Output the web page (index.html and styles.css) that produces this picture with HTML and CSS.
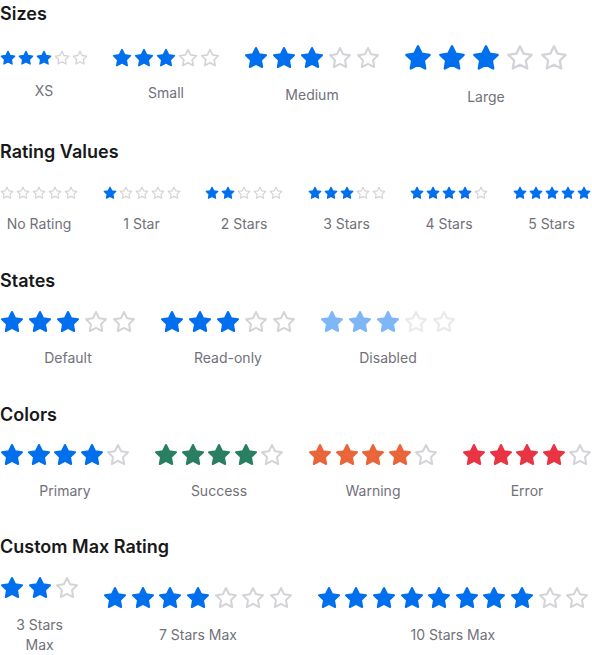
FILE: index.html
```html
<!DOCTYPE html>
<html lang="en">
<head>
<meta charset="utf-8">
<title>Rating</title>
<link rel="stylesheet" href="styles.css">
</head>
<body>
<svg class="sprite" aria-hidden="true"><defs><symbol id="star" viewBox="0 0 24 24"><polygon points="12 2 15.09 8.26 22 9.27 17 14.14 18.18 21.02 12 17.77 5.82 21.02 7 14.14 2 9.27 8.91 8.26 12 2"/></symbol></defs></svg>
<main class="page">
  <section class="section section-sizes">
    <h2 class="section-title">Sizes</h2>
    <div class="row row-sizes">
      <div class="rating">
        <div class="stars stars-xs">
          <svg class="star on"><use href="#star"/></svg><svg class="star on"><use href="#star"/></svg><svg class="star on"><use href="#star"/></svg><svg class="star"><use href="#star"/></svg><svg class="star"><use href="#star"/></svg>
        </div>
        <div class="label">XS</div>
      </div>
      <div class="rating">
        <div class="stars stars-sm">
          <svg class="star on"><use href="#star"/></svg><svg class="star on"><use href="#star"/></svg><svg class="star on"><use href="#star"/></svg><svg class="star"><use href="#star"/></svg><svg class="star"><use href="#star"/></svg>
        </div>
        <div class="label">Small</div>
      </div>
      <div class="rating">
        <div class="stars stars-md">
          <svg class="star on"><use href="#star"/></svg><svg class="star on"><use href="#star"/></svg><svg class="star on"><use href="#star"/></svg><svg class="star"><use href="#star"/></svg><svg class="star"><use href="#star"/></svg>
        </div>
        <div class="label">Medium</div>
      </div>
      <div class="rating">
        <div class="stars stars-lg">
          <svg class="star on"><use href="#star"/></svg><svg class="star on"><use href="#star"/></svg><svg class="star on"><use href="#star"/></svg><svg class="star"><use href="#star"/></svg><svg class="star"><use href="#star"/></svg>
        </div>
        <div class="label">Large</div>
      </div>
    </div>
  </section>

  <section class="section">
    <h2 class="section-title">Rating Values</h2>
    <div class="row row-values">
      <div class="rating">
        <div class="stars stars-tiny">
          <svg class="star"><use href="#star"/></svg><svg class="star"><use href="#star"/></svg><svg class="star"><use href="#star"/></svg><svg class="star"><use href="#star"/></svg><svg class="star"><use href="#star"/></svg>
        </div>
        <div class="label">No Rating</div>
      </div>
      <div class="rating">
        <div class="stars stars-tiny">
          <svg class="star on"><use href="#star"/></svg><svg class="star"><use href="#star"/></svg><svg class="star"><use href="#star"/></svg><svg class="star"><use href="#star"/></svg><svg class="star"><use href="#star"/></svg>
        </div>
        <div class="label">1 Star</div>
      </div>
      <div class="rating">
        <div class="stars stars-tiny">
          <svg class="star on"><use href="#star"/></svg><svg class="star on"><use href="#star"/></svg><svg class="star"><use href="#star"/></svg><svg class="star"><use href="#star"/></svg><svg class="star"><use href="#star"/></svg>
        </div>
        <div class="label">2 Stars</div>
      </div>
      <div class="rating">
        <div class="stars stars-tiny">
          <svg class="star on"><use href="#star"/></svg><svg class="star on"><use href="#star"/></svg><svg class="star on"><use href="#star"/></svg><svg class="star"><use href="#star"/></svg><svg class="star"><use href="#star"/></svg>
        </div>
        <div class="label">3 Stars</div>
      </div>
      <div class="rating">
        <div class="stars stars-tiny">
          <svg class="star on"><use href="#star"/></svg><svg class="star on"><use href="#star"/></svg><svg class="star on"><use href="#star"/></svg><svg class="star on"><use href="#star"/></svg><svg class="star"><use href="#star"/></svg>
        </div>
        <div class="label">4 Stars</div>
      </div>
      <div class="rating">
        <div class="stars stars-tiny">
          <svg class="star on"><use href="#star"/></svg><svg class="star on"><use href="#star"/></svg><svg class="star on"><use href="#star"/></svg><svg class="star on"><use href="#star"/></svg><svg class="star on"><use href="#star"/></svg>
        </div>
        <div class="label">5 Stars</div>
      </div>
    </div>
  </section>

  <section class="section">
    <h2 class="section-title">States</h2>
    <div class="row">
      <div class="rating">
        <div class="stars stars-md">
          <svg class="star on"><use href="#star"/></svg><svg class="star on"><use href="#star"/></svg><svg class="star on"><use href="#star"/></svg><svg class="star"><use href="#star"/></svg><svg class="star"><use href="#star"/></svg>
        </div>
        <div class="label">Default</div>
      </div>
      <div class="rating">
        <div class="stars stars-md">
          <svg class="star on"><use href="#star"/></svg><svg class="star on"><use href="#star"/></svg><svg class="star on"><use href="#star"/></svg><svg class="star"><use href="#star"/></svg><svg class="star"><use href="#star"/></svg>
        </div>
        <div class="label">Read-only</div>
      </div>
      <div class="rating">
        <div class="stars stars-md stars-disabled">
          <svg class="star on"><use href="#star"/></svg><svg class="star on"><use href="#star"/></svg><svg class="star on"><use href="#star"/></svg><svg class="star"><use href="#star"/></svg><svg class="star"><use href="#star"/></svg>
        </div>
        <div class="label">Disabled</div>
      </div>
    </div>
  </section>

  <section class="section section-colors">
    <h2 class="section-title">Colors</h2>
    <div class="row row-colors">
      <div class="rating">
        <div class="stars stars-color">
          <svg class="star on"><use href="#star"/></svg><svg class="star on"><use href="#star"/></svg><svg class="star on"><use href="#star"/></svg><svg class="star on"><use href="#star"/></svg><svg class="star"><use href="#star"/></svg>
        </div>
        <div class="label">Primary</div>
      </div>
      <div class="rating">
        <div class="stars stars-color tone-success">
          <svg class="star on"><use href="#star"/></svg><svg class="star on"><use href="#star"/></svg><svg class="star on"><use href="#star"/></svg><svg class="star on"><use href="#star"/></svg><svg class="star"><use href="#star"/></svg>
        </div>
        <div class="label">Success</div>
      </div>
      <div class="rating">
        <div class="stars stars-color tone-warning">
          <svg class="star on"><use href="#star"/></svg><svg class="star on"><use href="#star"/></svg><svg class="star on"><use href="#star"/></svg><svg class="star on"><use href="#star"/></svg><svg class="star"><use href="#star"/></svg>
        </div>
        <div class="label">Warning</div>
      </div>
      <div class="rating">
        <div class="stars stars-color tone-error">
          <svg class="star on"><use href="#star"/></svg><svg class="star on"><use href="#star"/></svg><svg class="star on"><use href="#star"/></svg><svg class="star on"><use href="#star"/></svg><svg class="star"><use href="#star"/></svg>
        </div>
        <div class="label">Error</div>
      </div>
    </div>
  </section>

  <section class="section">
    <h2 class="section-title">Custom Max Rating</h2>
    <div class="row row-custom">
      <div class="rating">
        <div class="stars stars-custom">
          <svg class="star on"><use href="#star"/></svg><svg class="star on"><use href="#star"/></svg><svg class="star"><use href="#star"/></svg>
        </div>
        <div class="label label-narrow">3 Stars Max</div>
      </div>
      <div class="rating">
        <div class="stars stars-custom">
          <svg class="star on"><use href="#star"/></svg><svg class="star on"><use href="#star"/></svg><svg class="star on"><use href="#star"/></svg><svg class="star on"><use href="#star"/></svg><svg class="star"><use href="#star"/></svg><svg class="star"><use href="#star"/></svg><svg class="star"><use href="#star"/></svg>
        </div>
        <div class="label">7 Stars Max</div>
      </div>
      <div class="rating">
        <div class="stars stars-custom">
          <svg class="star on"><use href="#star"/></svg><svg class="star on"><use href="#star"/></svg><svg class="star on"><use href="#star"/></svg><svg class="star on"><use href="#star"/></svg><svg class="star on"><use href="#star"/></svg><svg class="star on"><use href="#star"/></svg><svg class="star on"><use href="#star"/></svg><svg class="star on"><use href="#star"/></svg><svg class="star"><use href="#star"/></svg><svg class="star"><use href="#star"/></svg>
        </div>
        <div class="label">10 Stars Max</div>
      </div>
    </div>
  </section>
</main>
</body>
</html>
```

FILE: styles.css
```css
* { box-sizing: border-box; }

html, body {
  margin: 0;
  padding: 0;
  background: #ffffff;
  overflow: hidden;
}

body {
  font-family: Inter, "Noto Sans", sans-serif;
  color: #18181b;
}

.sprite {
  position: absolute;
  width: 0;
  height: 0;
  overflow: hidden;
}

.page {
  display: flex;
  flex-direction: column;
}

.section {
  padding-bottom: 33px;
}

.section-sizes {
  padding-bottom: 31px;
}

.section-colors {
  padding-bottom: 32px;
}

.section:last-child {
  padding-bottom: 0;
}

.section-title {
  margin: 0;
  font-size: 18px;
  line-height: 27px;
  font-weight: 600;
  color: #18181b;
}

.row {
  display: flex;
  align-items: center;
  gap: 24px;
  margin-top: 16px;
}

.row-sizes {
  margin-top: 17px;
}

.row-values {
  margin-top: 21px;
  gap: 24.5px;
}

.row-colors {
  margin-top: 15px;
}

.rating {
  display: flex;
  flex-direction: column;
  align-items: center;
  gap: 14px;
  flex-shrink: 0;
}

.row-sizes .rating {
  gap: 15px;
}

.row-custom .rating {
  gap: 15px;
}

.stars {
  display: flex;
  gap: 2px;
  color: #006fee;
}

.star {
  display: block;
  flex-shrink: 0;
  width: 24px;
  height: 24px;
  fill: none;
  stroke: #d4d4d8;
  stroke-width: 2;
  stroke-linejoin: round;
  stroke-linecap: round;
}

.star.on {
  fill: currentColor;
  stroke: currentColor;
}

.stars-tiny .star { width: 14px; height: 14px; }
.stars-xs .star { width: 16px; height: 16px; }
.stars-sm .star { width: 20px; height: 20px; }
.stars-md { gap: 4px; }
.stars-lg { gap: 6px; }
.stars-lg .star { width: 28px; height: 28px; }
.stars-color { gap: 2.5px; }
.stars-custom { gap: 3.6px; }

.stars-disabled { opacity: 0.5; }

.tone-success { color: #2a7f62; }
.tone-warning { color: #e8663a; }
.tone-error { color: #e93444; }

.label {
  font-size: 14px;
  line-height: 20px;
  color: #71717a;
  text-align: center;
}

.label-narrow {
  max-width: 64px;
}
```
